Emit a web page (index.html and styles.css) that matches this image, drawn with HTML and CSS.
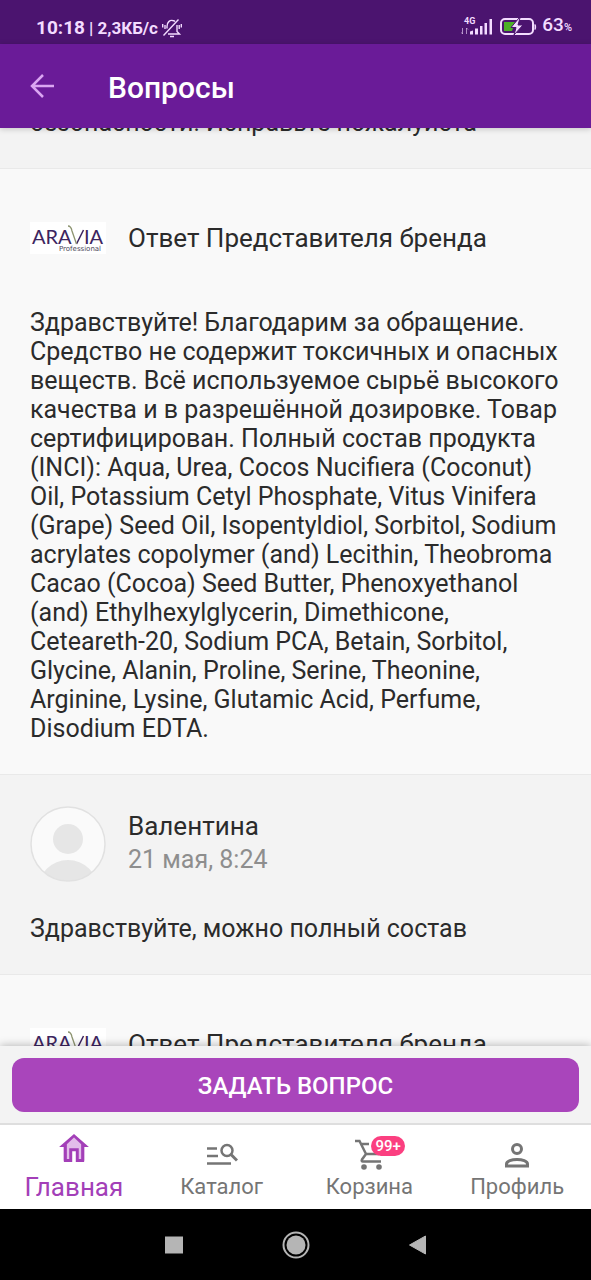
FILE: index.html
```html
<!DOCTYPE html>
<html lang="ru">
<head>
<meta charset="utf-8">
<meta name="viewport" content="width=device-width, initial-scale=1">
<title>Вопросы</title>
<link rel="stylesheet" href="styles.css">
</head>
<body>
<div class="app">
  <div class="status">
    <div class="status-left">
      <span class="clock">10:18</span>
      <span class="rate">| 2,3КБ/с</span>
      <svg class="bell" width="20" height="20" viewBox="0 0 20 20" fill="none" stroke="currentColor" stroke-width="1.400">
        <path d="M5 10.500V8.500C5 4 8 2 10.500 2.500q1.500 0 2.500 1M15 7v6.500l2.500 2.500H6M8 18.500h4M1.500 17.500 16.500 1.500M.700 6v3.500M19.300 6v3.500M3 7v4M17.200 7v4"/>
      </svg>
    </div>
    <div class="status-right">
      <svg class="signal" width="33" height="20" viewBox="0 0 33 20" fill="currentColor">
        <text class="signal-label" x="3" y="7">4G</text>
        <path d="M9 17.500v-3l3-1v4zM14 17.500v-6h3v6zM19 17.500V9h2.500v8.500zM23.500 17.500V6H26v11.500zM28.500 17.500V2H31v15.500z"/>
        <path d="M1.500 11v6M.500 15.500l1 1.500M5.500 17v-6M7 12.500 5.500 11" fill="none" stroke="currentColor" stroke-width="1" opacity=".6"/>
      </svg>
      <svg class="battery" width="38" height="20" viewBox="0 0 38 20">
        <rect x="2" y="2" width="32" height="15" rx="4" fill="none" stroke="currentColor" stroke-width="2"/>
        <path d="M5 5h11l-3 9H5z" fill="#4caf28"/>
        <path d="M36 7.500q1.500 2.500 0 5z" fill="currentColor" stroke="currentColor"/>
        <path d="M20 1 12 10.500h5L15 18l9-10h-5l2-7z" fill="currentColor" stroke="#4b146f" stroke-width="1"/>
      </svg>
      <span class="charge">63<small class="percent">%</small></span>
    </div>
  </div>

  <header class="topbar">
    <button class="back" type="button" aria-label="Назад">
      <svg width="24" height="24" viewBox="0 0 24 24" fill="none" stroke="currentColor" stroke-width="2.500"><path d="M24 12H2M13 1 2 12l11 11"/></svg>
    </button>
    <h1 class="title">Вопросы</h1>
  </header>

  <main class="feed">
    <article class="entry entry-cut">
      <p class="message">безопасности! Исправьте пожалуйста</p>
    </article>

    <article class="entry entry-answer">
      <div class="author">
        <div class="slot">
          <svg class="brand" width="76" height="32" viewBox="0 0 76 32" role="img" aria-label="ARAVIA Professional">
            <rect width="76" height="32" fill="#fff"/>
            <text class="brand-name" x="2" y="22">ARA</text>
            <path d="M46.500 22 53.500 8" stroke="#3d2560" stroke-width="1.500" fill="none"/>
            <path d="M38 4q3 0 4 5l4.500 13" stroke="#8d9470" stroke-width="1.300" fill="none"/>
            <text class="brand-name" x="54" y="22">IA</text>
            <text class="brand-sub" x="29" y="29">Professional</text>
          </svg>
        </div>
        <h2 class="name">Ответ Представителя бренда</h2>
      </div>
      <p class="message">Здравствуйте! Благодарим за обращение. Средство не содержит токсичных и опасных веществ. Всё используемое сырьё высокого качества и в разрешённой дозировке. Товар сертифицирован. Полный состав продукта (INCI): Aqua, Urea, Cocos Nucifiera (Coconut) Oil, Potassium Cetyl Phosphate, Vitus Vinifera (Grape) Seed Oil, Isopentyldiol, Sorbitol, Sodium acrylates copolymer (and) Lecithin, Theobroma Cacao (Cocoa) Seed Butter, Phenoxyethanol (and) Ethylhexylglycerin, Dimethicone, Ceteareth-20, Sodium PCA, Betain, Sorbitol, Glycine, Alanin, Proline, Serine, Theonine, Arginine, Lysine, Glutamic Acid, Perfume, Disodium EDTA.</p>
    </article>

    <article class="entry">
      <div class="author">
        <div class="slot">
          <svg width="76" height="76" viewBox="0 0 76 76" role="img" aria-label="Аватар">
            <defs><clipPath id="round"><circle cx="38" cy="38" r="37"/></clipPath></defs>
            <circle cx="38" cy="38" r="37" fill="#fafafa"/>
            <g fill="#e6e6e6" clip-path="url(#round)"><circle cx="38" cy="33" r="15"/><circle cx="38" cy="84" r="30"/></g>
            <circle cx="38" cy="38" r="37" fill="none" stroke="#e1e1e1" stroke-width="1.500"/>
          </svg>
        </div>
        <div class="who">
          <h2 class="name">Валентина</h2>
          <time class="date">21 мая, 8:24</time>
        </div>
      </div>
      <p class="message">Здравствуйте, можно полный состав</p>
    </article>

    <article class="entry entry-answer">
      <div class="author">
        <div class="slot">
          <svg class="brand" width="76" height="32" viewBox="0 0 76 32" role="img" aria-label="ARAVIA Professional">
            <rect width="76" height="32" fill="#fff"/>
            <text class="brand-name" x="2" y="22">ARA</text>
            <path d="M46.500 22 53.500 8" stroke="#3d2560" stroke-width="1.500" fill="none"/>
            <path d="M38 4q3 0 4 5l4.500 13" stroke="#8d9470" stroke-width="1.300" fill="none"/>
            <text class="brand-name" x="54" y="22">IA</text>
          </svg>
        </div>
        <h2 class="name">Ответ Представителя бренда</h2>
      </div>
    </article>
  </main>

  <div class="ask"><button class="ask-button" type="button">ЗАДАТЬ ВОПРОС</button></div>

  <nav class="tabs">
    <a class="tab tab-active" href="#home">
      <svg width="30" height="28" viewBox="2.500 2.500 25 23.500"><path d="M6 13v12h7v-9h4v9h7V13l-9-8z" fill="#e3bdea"/><path d="M15 2.500 2.500 13.500h4V26h7v-9h3v9h7V13.500h4zM15 5.500l6 5.500v12.500h-2v-9h-8v9H9V11z" fill="currentColor" fill-rule="evenodd"/></svg>
      <span>Главная</span>
    </a>
    <a class="tab" href="#catalog">
      <svg width="32" height="28" viewBox="0 0 32 28" fill="none" stroke="currentColor" stroke-width="2.500"><path d="M1 6.500h10M1 14h11M1 21.500h24"/><circle cx="21" cy="8.500" r="5.500"/><path d="m25 12.500 6 6" stroke-width="3"/></svg>
      <span>Каталог</span>
    </a>
    <a class="tab" href="#cart">
      <span class="cart">
        <svg width="32" height="32" viewBox="0 0 32 32" fill="none" stroke="currentColor" stroke-width="2.500"><path d="M2 3h4.500l7 14M7.500 6H16M13 16h13M13 16l-4 5.500q-1 2 1 2h18"/><circle cx="11" cy="29" r="2.800" fill="currentColor" stroke="none"/><circle cx="26" cy="29" r="2.800" fill="currentColor" stroke="none"/></svg>
        <span class="badge">99+</span>
      </span>
      <span>Корзина</span>
    </a>
    <a class="tab" href="#profile">
      <svg width="26" height="28" viewBox="0 0 26 28" fill="none" stroke="currentColor" stroke-width="3"><circle cx="13" cy="7" r="4.500"/><path d="M2.500 24v-2c0-6 21-6 21 0v2z"/></svg>
      <span>Профиль</span>
    </a>
  </nav>

  <div class="system">
    <button class="key" type="button" aria-label="Недавние"><svg width="28" height="28" viewBox="0 0 28 28"><path d="M5 5.500h18v17H5z" fill="currentColor"/></svg></button>
    <button class="key" type="button" aria-label="Домой"><svg width="28" height="28" viewBox="0 0 28 28"><circle cx="14" cy="14" r="9.500" fill="currentColor"/><circle cx="14" cy="14" r="12.500" fill="none" stroke="currentColor" stroke-width="2"/></svg></button>
    <button class="key" type="button" aria-label="Назад"><svg width="28" height="28" viewBox="0 0 28 28"><path d="m5.500 14 16-9v18z" fill="currentColor" stroke="currentColor" stroke-linejoin="round"/></svg></button>
  </div>
</div>
</body>
</html>
```
FILE: styles.css
```css
* { box-sizing: border-box; }
body { margin: 0; font-family: Roboto, "Noto Sans", sans-serif; color: #2b2b2b; }
h1, h2, p { margin: 0; font-weight: 400; }
button { border: 0; padding: 0; background: none; font: inherit; color: inherit; }
svg { display: block; flex: none; }

.app { display: flex; flex-direction: column; height: 100vh; }

.status {
  display: flex; justify-content: space-between; align-items: flex-end;
  height: 44px; padding: 0 19px 6px 36px;
  background: #4b146f; color: #f3dcff; flex: none;
}
.status-left, .status-right { display: flex; align-items: center; gap: 4px; }
.clock, .rate { font-weight: 700; line-height: 20px; }
.clock { font-size: 19px; }
.rate { font-size: 17px; }
.signal-label { font-size: 9px; font-weight: 700; }
.status-right { gap: 5px; }
.charge { font-size: 19px; font-weight: 500; line-height: 20px; }
.percent { font-size: 11px; }

.topbar {
  position: relative; z-index: 1; display: flex; align-items: center; gap: 54px;
  height: 84px; padding: 0 30px; flex: none;
  background: #6a1b98; color: #fff; box-shadow: 0 1px 6px rgba(0, 0, 0, .2);
}
.back { color: #dba6f2; }
.title { padding-top: 3px; font-size: 30px; font-weight: 500; line-height: 36px; }

.feed { flex: 1; min-height: 0; overflow: hidden; background: #f3f3f3; }
.entry { padding: 31px 30px; border-top: 1px solid #e9e9e9; background: #f3f3f3; }
.entry-answer { background: #f9f9f9; }
.entry-cut { display: flex; align-items: flex-end; height: 40px; padding-top: 0; border-top: 0; }
.author { display: flex; align-items: center; gap: 22px; height: 76px; margin-bottom: 32px; }
.slot { width: 76px; flex: none; }
.name { font-size: 26px; line-height: 34px; }
.who { padding-bottom: 3px; }
.date { display: block; font-size: 25px; line-height: 34px; color: #8e8e8e; }
.message { font-size: 25px; line-height: 29px; }
.brand-name { font-family: Lato, sans-serif; font-size: 20px; fill: #3d2560; }
.brand-sub { font-family: "DejaVu Sans", sans-serif; font-size: 7px; fill: #4c4758; }

.ask {
  position: relative; z-index: 1; padding: 12px 12px 11px; flex: none;
  background: #f3f3f3; border-bottom: 2px solid #dedede; box-shadow: 0 -1px 8px rgba(0, 0, 0, .25);
}
.ask-button {
  display: block; width: 100%; height: 54px; padding-top: 2px; border-radius: 12px;
  background: #a945bb; color: #fff; font-size: 24px; font-weight: 500;
}

.tabs {
  position: relative; z-index: 2; display: grid; grid-template-columns: repeat(4, 1fr);
  height: 84px; background: #fff; flex: none;
}
.tab {
  display: flex; flex-direction: column; align-items: center; justify-content: flex-end; gap: 4px;
  padding-bottom: 9px; color: #757575; font-size: 22px; line-height: 26px; text-decoration: none;
}
.tab-active { gap: 12px; color: #a33fb8; font-size: 26px; }
.cart { position: relative; }
.badge {
  position: absolute; left: 18px; top: -2px; padding: 0 4px; border-radius: 10px;
  background: #fb3f80; color: #fff; font-size: 15px; font-weight: 500; line-height: 20px;
}

.system { display: flex; justify-content: center; align-items: center; gap: 94px; height: 71px; background: #000; flex: none; }
.key { color: #b5b5b5; }
```
